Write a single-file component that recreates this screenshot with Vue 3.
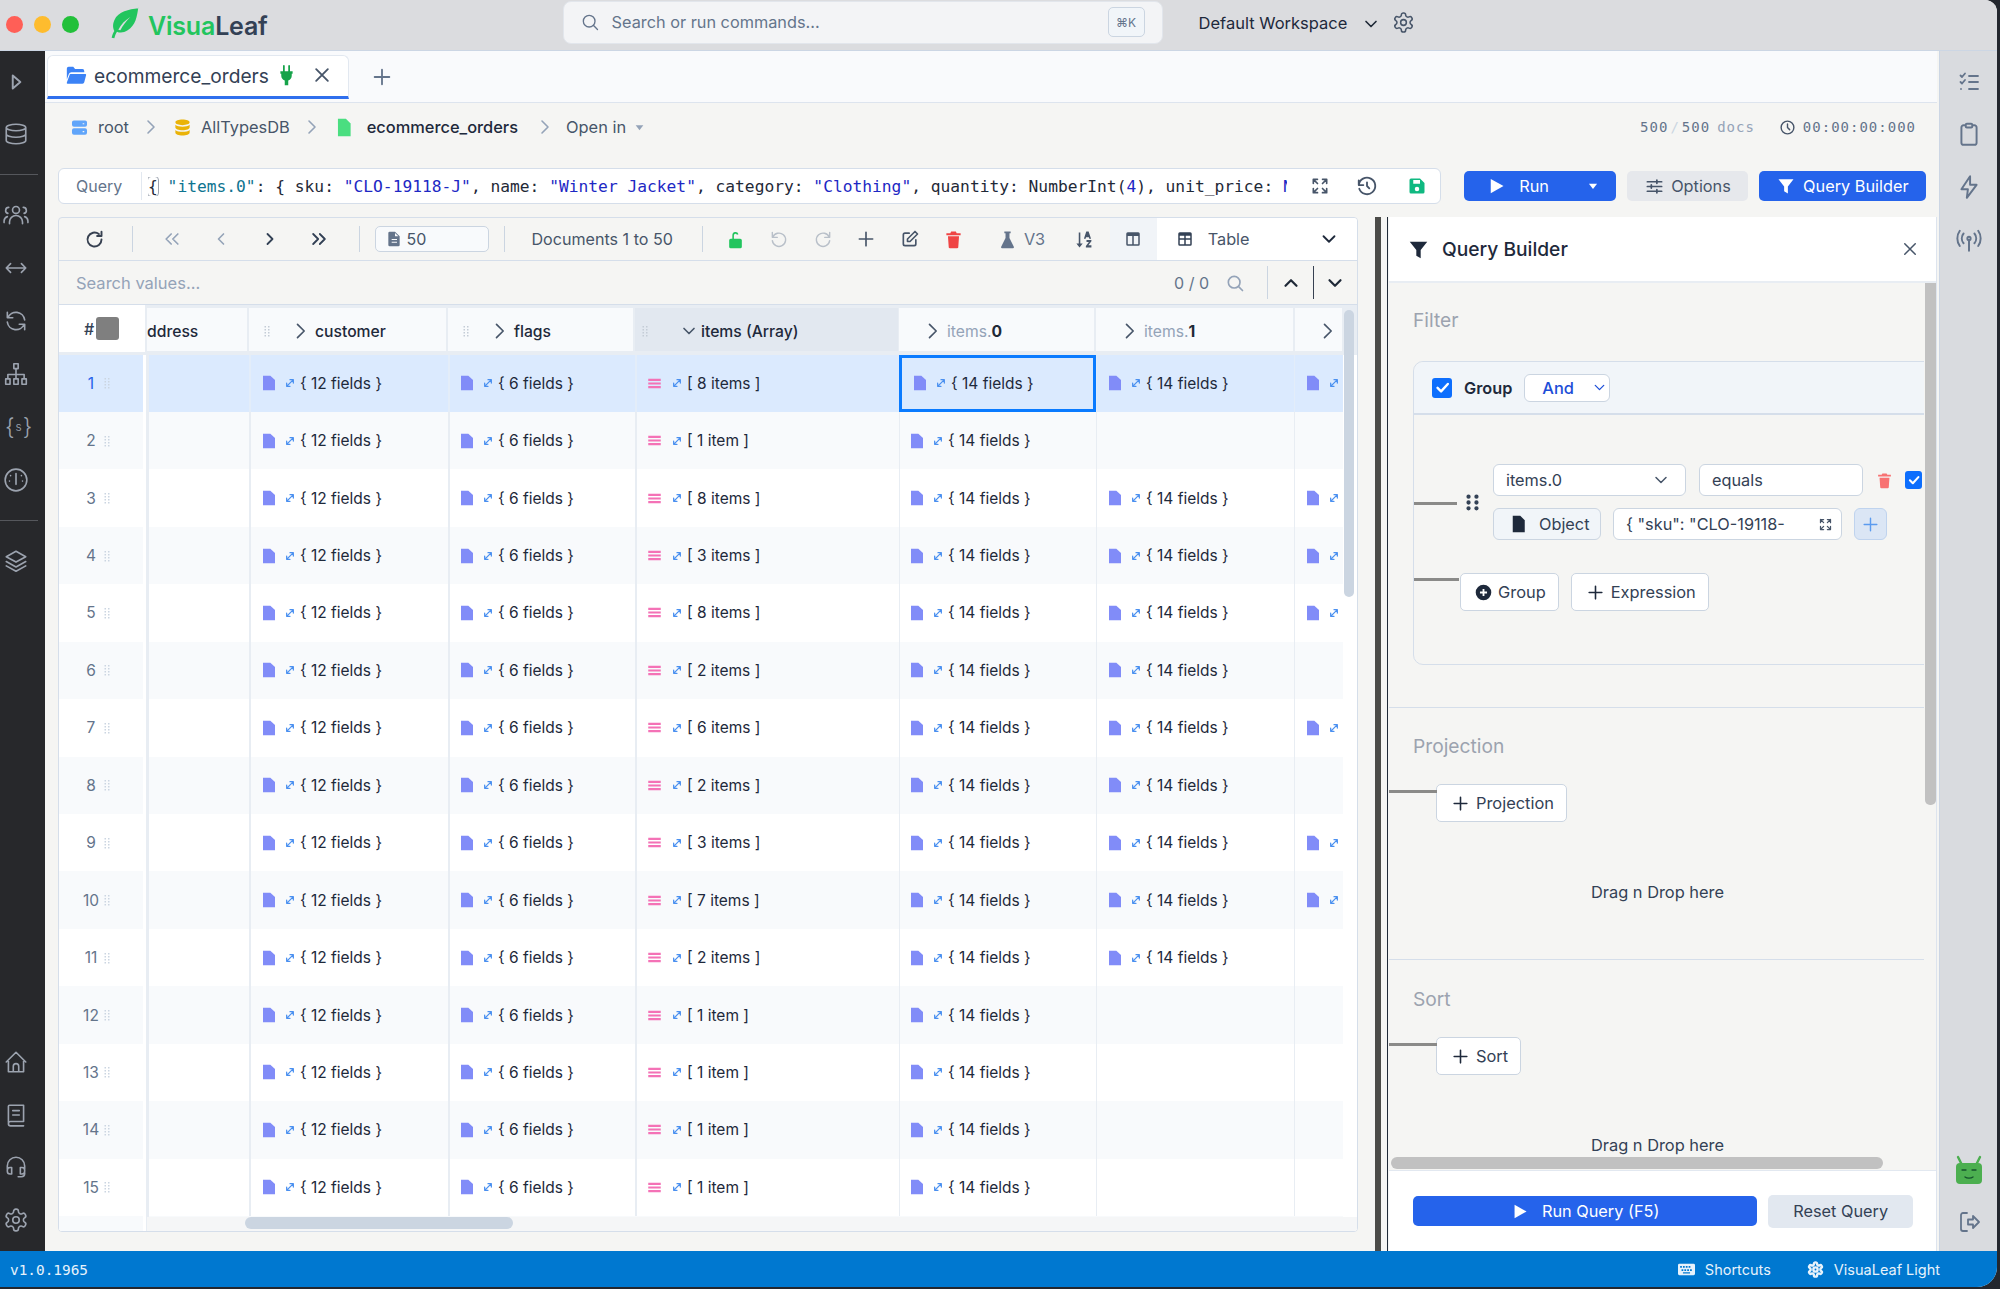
<script setup>
import { h } from 'vue'

const icons = {
  search: 'M11 4a7 7 0 1 0 0 14 7 7 0 0 0 0-14z M21 21l-5-5',
  chevDown: 'M6 9l6 6 6-6',
  chevUp: 'M6 15l6-6 6 6',
  chevRight: 'M9 4l8 8-8 8',
  chevLeft: 'M15 6l-6 6 6 6',
  chevR2: 'M9 6l6 6-6 6',
  dblLeft: 'M11 6l-6 6 6 6 M19 6l-6 6 6 6',
  dblRight: 'M5 6l6 6-6 6 M13 6l6 6-6 6',
  gear: 'M12.22 2h-.44a2 2 0 0 0-2 2v.18a2 2 0 0 1-1 1.73l-.43.25a2 2 0 0 1-2 0l-.15-.08a2 2 0 0 0-2.73.73l-.22.38a2 2 0 0 0 .73 2.73l.15.1a2 2 0 0 1 1 1.72v.51a2 2 0 0 1-1 1.74l-.15.09a2 2 0 0 0-.73 2.73l.22.38a2 2 0 0 0 2.73.73l.15-.08a2 2 0 0 1 2 0l.43.25a2 2 0 0 1 1 1.73V20a2 2 0 0 0 2 2h.44a2 2 0 0 0 2-2v-.18a2 2 0 0 1 1-1.73l.43-.25a2 2 0 0 1 2 0l.15.08a2 2 0 0 0 2.73-.73l.22-.39a2 2 0 0 0-.73-2.73l-.15-.08a2 2 0 0 1-1-1.74v-.5a2 2 0 0 1 1-1.74l.15-.09a2 2 0 0 0 .73-2.73l-.22-.38a2 2 0 0 0-2.73-.73l-.15.08a2 2 0 0 1-2 0l-.43-.25a2 2 0 0 1-1-1.73V4a2 2 0 0 0-2-2z M12 9a3 3 0 1 0 0 6 3 3 0 0 0 0-6z',
  play: 'M9 6l7 6-7 6z',
  runPlay: 'M5 2.500L22 12 5 21.500z',
  database: 'M12 3c4.97 0 9 1.34 9 3s-4.03 3-9 3-9-1.34-9-3 4.03-3 9-3z M3 6v12c0 1.66 4.03 3 9 3s9-1.34 9-3V6 M3 12c0 1.66 4.03 3 9 3s9-1.34 9-3',
  users: 'M12 10.5a3.2 3.2 0 1 0 0-6.4 3.2 3.2 0 0 0 0 6.4z M6 20v-1.5a6 6 0 0 1 12 0V20 M4.5 10.5a2.8 2.8 0 0 1 .8-5.5 M19.5 10.5a2.8 2.8 0 0 0-.8-5.5 M1 19v-1.5a4.5 4.5 0 0 1 3-4 M23 19v-1.5a4.5 4.5 0 0 0-3-4',
  arrows: 'M3 12h18 M7 8l-4 4 4 4 M17 8l4 4-4 4',
  refresh: 'M20 11A8.1 8.1 0 0 0 4.5 9M4 4v5h5 M4 13a8.1 8.1 0 0 0 15.5 2M20 20v-5h-5',
  reload: 'M20 12a8 8 0 1 1-3-6.2 M20 3v5h-5',
  sitemap: 'M10 2.5h4v4.5h-4z M2.5 16.5h4v5h-4z M10 16.5h4v5h-4z M17.5 16.5h4v5h-4z M12 7v9.5 M4.5 16.5V12.5h15v4',
  gauge: 'M12 2a10 10 0 1 0 0 20 10 10 0 0 0 0-20z M12 6v10 M7 8v.01 M17 8v.01 M6 13v.01 M18 13v.01',
  layers: 'M12 3l9 5-9 5-9-5z M3 12.5l9 5 9-5 M3 16.5l9 5 9-5',
  home: 'M3 12l9-9 9 9 M5 10v11h14V10 M9.5 21v-5a2.5 2.5 0 0 1 5 0v5',
  book: 'M5 19V4a1 1 0 0 1 1-1h13v15H7a2 2 0 0 0-2 2 2 2 0 0 0 2 2h12 M9 8h6 M9 12h6',
  headset: 'M4 14v-3a8 8 0 0 1 16 0v3 M4 15a2.5 2.5 0 0 1 2.5-2.5H8v6H6.5A2.5 2.5 0 0 1 4 16z M20 15a2.5 2.5 0 0 0-2.5-2.5H16v6h1.5A2.5 2.5 0 0 0 20 16z M20 17v1a3 3 0 0 1-3 3h-3',
  clock: 'M12 3a9 9 0 1 0 0 18 9 9 0 0 0 0-18z M12 7v5l3 3',
  expand: 'M4 9V4h5 M4 4l5 5 M20 9V4h-5 M20 4l-5 5 M4 15v5h5 M4 20l5-5 M20 15v5h-5 M20 20l-5-5',
  history: 'M12 8v4l2.5 2.5 M3.05 11a9 9 0 1 1 .5 4 M3 6v5h5',
  sliders: 'M3 6h18 M3 12h18 M3 18h18 M15 4v4 M8 10v4 M15 16v4',
  close: 'M5 5l14 14 M19 5L5 19',
  plus: 'M12 4v16 M4 12h16',
  undo: 'M4 4v6h6 M4.5 10a8 8 0 1 1-.5 4',
  redo: 'M20 4v6h-6 M19.5 10a8 8 0 1 0 .5 4',
  edit: 'M11 5H6a2 2 0 0 0-2 2v11a2 2 0 0 0 2 2h11a2 2 0 0 0 2-2v-5 M9 15v-3l9-9 3 3-9 9z',
  check: 'M5 12.5l5 5L19.5 7',
  checklist: 'M3.5 5.5l1.5 1.5 3-3.5 M3.5 12l1.5 1.5 3-3.5 M4 19h.01 M12 6h9 M12 12h9 M12 19h9',
  clipboard: 'M9 4H7a2 2 0 0 0-2 2v14a2 2 0 0 0 2 2h10a2 2 0 0 0 2-2V6a2 2 0 0 0-2-2h-2 M10 2.5h4a1 1 0 0 1 1 1V5a1 1 0 0 1-1 1h-4a1 1 0 0 1-1-1V3.500a1 1 0 0 1 1-1z',
  bolt: 'M13 2L5 14h6l-1 8 9-12h-6z',
  antenna: 'M12 9a1.5 1.5 0 1 0 0 3 1.5 1.5 0 0 0 0-3z M12 12v10 M7 6a7 7 0 0 0 0 9 M17 6a7 7 0 0 1 0 9 M3.500 3.500a12 12 0 0 0 0 14 M20.500 3.500a12 12 0 0 1 0 14',
  logout: 'M10 3H6a2 2 0 0 0-2 2v14a2 2 0 0 0 2 2h4 M11 9.500h5V6l6 6-6 6v-3.500h-5z',
  cellArrow: 'M20 4L4 20 M20 4h-8 M20 4v8 M4 20h8 M4 20v-8',
  // filled
  leaf: 'M22 1C15 2 7 3 4 10c-1.500 3.500-1 6 0 8-1 1.500-1.500 3-2 5l2 .5c.5-2 1-3.500 2-5 2 1 5 1 8-1 6-4 7-10 8-17.500zM7 17c2-4 5-7 9-9.500-3 3-5.500 6-7.500 10z',
  folder: 'M2 5a2 2 0 0 1 2-2h5l2 2.500h8a2 2 0 0 1 2 2V9H7a3 3 0 0 0-2.800 2L2 17z M6 11h16a1 1 0 0 1 1 1.300L21 20a2 2 0 0 1-2 1.500H3a1 1 0 0 1-1-1.300L5 12a1.200 1.200 0 0 1 1-1z',
  plug: 'M8 1a1 1 0 0 1 2 0v6h4V1a1 1 0 0 1 2 0v6h3v3h-1v2a6 6 0 0 1-4 5.700V23h-4v-5.300A6 6 0 0 1 6 12v-2H5V7h3z',
  server: 'M5 3h14a2.500 2.500 0 0 1 2.500 2.500v3A2.500 2.500 0 0 1 19 11H5a2.500 2.500 0 0 1-2.500-2.500v-3A2.500 2.500 0 0 1 5 3zm11 3.500v1.500h2V6.500z M5 13h14a2.500 2.500 0 0 1 2.500 2.500v3A2.500 2.500 0 0 1 19 21H5a2.500 2.500 0 0 1-2.500-2.500v-3A2.500 2.500 0 0 1 5 13zm11 3.500V18h2v-1.500z',
  dbFill: 'M12 2c5 0 9 1.300 9 3.500S17 9 12 9 3 7.700 3 5.500 7 2 12 2z M3 8.500c1.800 1.700 5.500 2.500 9 2.500s7.200-.8 9-2.500V12c0 2-4 3.500-9 3.500S3 14 3 12z M3 15c1.800 1.700 5.500 2.500 9 2.500s7.200-.8 9-2.500v3.500c0 2-4 3.500-9 3.500s-9-1.500-9-3.500z',
  file: 'M5 1h10l6 6v16H5z',
  docSmall: 'M4 1a2 2 0 0 0-2 2v18a2 2 0 0 0 2 2h13a2 2 0 0 0 2-2V8l-7-7zm3 11h8v1.500H7zm0 4h8v1.500H7z M12 3l5 5h-5z',
  caret: 'M5 8h14l-7 9z',
  filter: 'M2 3h20l-7.500 9.500V22l-5-3v-6.500z',
  lock: 'M8 11V6.500a4 4 0 0 1 7.800-1.200l-2 .7A2 2 0 0 0 10 6.500V11h8a2 2 0 0 1 2 2v8a2 2 0 0 1-2 2H6a2 2 0 0 1-2-2v-8a2 2 0 0 1 2-2z',
  trash: 'M9 2h6l1 2h5v2.500H3V4h5z M5 8h14l-1 14a1.500 1.500 0 0 1-1.500 1h-9A1.500 1.500 0 0 1 6 22z',
  flask: 'M8 2h8v2h-1.500v6L20 21a1.500 1.500 0 0 1-1.300 2H5.300A1.500 1.500 0 0 1 4 21l5.500-11V4H8z',
  sortAz: 'M6 3h2v14h3l-4 5-4-5h3z M15.500 2h3l3 9h-2.200l-.5-1.700h-3.600L14.700 11h-2.200z M15.800 12.500H22v1.800l-3.800 5H22V22h-7v-1.800l3.800-5h-3z',
  columns: 'M5 3h14a2 2 0 0 1 2 2v14a2 2 0 0 1-2 2H5a2 2 0 0 1-2-2V5a2 2 0 0 1 2-2zm0 5v11h6V8zm8 0v11h6V8z',
  table: 'M5 3h14a2 2 0 0 1 2 2v14a2 2 0 0 1-2 2H5a2 2 0 0 1-2-2V5a2 2 0 0 1 2-2zm0 4.500V11h6V7.500zm8 0V11h6V7.500zM5 13v6h6v-6zm8 0v6h6v-6z',
  save: 'M5 2h11l6 6v12a2 2 0 0 1-2 2H4a2 2 0 0 1-2-2V4a2 2 0 0 1 2-2zm2 2v5h9V4zm5 9a3 3 0 1 0 0 6 3 3 0 0 0 0-6z',
  keyboard: 'M2 4h20a2 2 0 0 1 2 2v12a2 2 0 0 1-2 2H2a2 2 0 0 1-2-2V6a2 2 0 0 1 2-2zm1 3v2.500h2.500V7zm4 0v2.500h2.500V7zm4 0v2.500h2.500V7zm4 0v2.500h2.500V7zM5 11.500V14h2.500v-2.500zm4 0V14h2.500v-2.500zm4 0V14h2.500v-2.500zm4 0V14h2.500v-2.500zM7 16v1.500h10V16z',
  circlePlus: 'M12 1a11 11 0 1 0 0 22 11 11 0 0 0 0-22zm-1.300 6h2.600v3.700H17v2.600h-3.700V17h-2.600v-3.700H7v-2.600h3.700z',
  grip: 'M7 2a2.700 2.700 0 1 0 0 5.400 2.700 2.700 0 0 0 0-5.400z M17 2a2.700 2.700 0 1 0 0 5.400 2.700 2.700 0 0 0 0-5.400z M7 9.300a2.700 2.700 0 1 0 0 5.400 2.700 2.700 0 0 0 0-5.400z M17 9.300a2.700 2.700 0 1 0 0 5.400 2.700 2.700 0 0 0 0-5.400z M7 16.600a2.700 2.700 0 1 0 0 5.400 2.700 2.700 0 0 0 0-5.400z M17 16.600a2.700 2.700 0 1 0 0 5.400 2.700 2.700 0 0 0 0-5.400z',
  dots: 'M7 2h3v3H7z M14 2h3v3h-3z M7 8h3v3H7z M14 8h3v3h-3z M7 14h3v3H7z M14 14h3v3h-3z M7 20h3v3H7z M14 20h3v3h-3z',
  docCell: 'M3 1h11l7 6.500V23H3z',
  bars: 'M2 4.500h20v3.300H2z M2 10.300h20v3.300H2z M2 16.100h20v3.300H2z'
}

const Icon = (p) =>
  h('svg', {
    viewBox: '0 0 24 24',
    width: p.size || 20,
    height: p.size || 20,
    fill: p.fill ? 'currentColor' : 'none',
    'fill-rule': 'evenodd',
    stroke: p.fill ? 'none' : 'currentColor',
    'stroke-width': p.sw || 2,
    'stroke-linecap': 'round',
    'stroke-linejoin': 'round'
  }, [h('path', { d: icons[p.name] })])
Icon.props = { name: String, size: Number, sw: Number, fill: Boolean }

const topSide = [
  { name: 'database' },
  { sep: true },
  { name: 'users' },
  { name: 'arrows' },
  { name: 'refresh' },
  { name: 'sitemap' },
  { text: true },
  { name: 'gauge' },
  { sep: true },
  { name: 'layers' }
]

const itemCounts = [8, 1, 8, 3, 8, 2, 6, 2, 3, 7, 2, 1, 1, 1, 1]
const rows = itemCounts.map((n, i) => ({ no: i + 1, n, label: n === 1 ? '[ 1 item ]' : `[ ${n} items ]` }))
</script>

<template>
  <div class="app">
    <header class="titlebar">
      <div class="lights"><i class="red"></i><i class="amber"></i><i class="green"></i></div>
      <Icon name="leaf" :size="32" fill class="logo-leaf" />
      <div class="logo"><span class="logo-a">Visua</span><span class="logo-b">Leaf</span></div>
      <div class="cmd">
        <Icon name="search" :size="20" :sw="1.6" class="cmd-icon" />
        <span>Search or run commands...</span>
        <kbd>⌘K</kbd>
      </div>
      <div class="workspace">Default Workspace</div>
      <Icon name="chevDown" :size="20" :sw="2" class="ws-chev" />
      <Icon name="gear" :size="23" :sw="1.6" class="ws-gear" />
    </header>

    <div class="middle">
      <aside class="side">
        <div class="side-group">
          <Icon name="play" :size="26" :sw="1.8" class="side-play" />
          <template v-for="(it, i) in topSide" :key="i">
            <div v-if="it.sep" class="side-sep"></div>
            <div v-else-if="it.text" class="side-item side-s"><span>{</span><small>s</small><span>}</span></div>
            <div v-else class="side-item"><Icon :name="it.name" :size="26" :sw="1.5" /></div>
          </template>
        </div>
        <div class="side-group side-bottom">
          <div class="side-item"><Icon name="home" :size="26" :sw="1.5" /></div>
          <div class="side-item"><Icon name="book" :size="26" :sw="1.5" /></div>
          <div class="side-item"><Icon name="headset" :size="26" :sw="1.5" /></div>
          <div class="side-item"><Icon name="gear" :size="26" :sw="1.5" /></div>
        </div>
      </aside>

      <main class="main">
        <div class="tabs">
          <div class="tab">
            <Icon name="folder" :size="22" fill class="c-blue" />
            <span class="tab-name">ecommerce_orders</span>
            <Icon name="plug" :size="21" fill class="c-plug" />
            <Icon name="close" :size="20" :sw="2.2" class="tab-x" />
          </div>
          <Icon name="plus" :size="22" :sw="2" class="tab-add" />
        </div>

        <div class="crumbs">
          <Icon name="server" :size="19" fill class="c-blue2" />
          <span class="cr root">root</span>
          <Icon name="chevR2" :size="24" :sw="1.6" class="cr-chev" />
          <Icon name="dbFill" :size="19" fill class="c-amber" />
          <span class="cr">AllTypesDB</span>
          <Icon name="chevR2" :size="24" :sw="1.6" class="cr-chev" />
          <Icon name="file" :size="19" fill class="c-mint" />
          <span class="cr cr-strong">ecommerce_orders</span>
          <Icon name="chevR2" :size="24" :sw="1.6" class="cr-chev cr-chev3" />
          <span class="cr cr-open">Open in</span>
          <Icon name="caret" :size="13" fill class="cr-caret" />
          <div class="stats">
            <span class="st-num">500</span><span class="st-slash">/</span><span class="st-num">500</span>
            <span class="st-docs">docs</span>
            <Icon name="clock" :size="17" :sw="2" class="st-clock" />
            <span class="st-num">00:00:00:000</span>
          </div>
        </div>

        <div class="query-row">
          <div class="query">
            <span class="q-label">Query</span>
            <span class="q-sep"></span>
            <div class="q-code"><span class="q-cursor">{</span> <span class="q-key">"items.0"</span>: { sku: <span class="q-str">"CLO-19118-J"</span>, name: <span class="q-str">"Winter Jacket"</span>, category: <span class="q-str">"Clothing"</span>, quantity: NumberInt(<span class="q-str">4</span>), unit_price: <span class="q-str">NumberDecimal</span></div>
            <Icon name="expand" :size="20" :sw="2" class="q-ic q-expand" />
            <Icon name="history" :size="22" :sw="2" class="q-ic q-hist" />
            <Icon name="save" :size="18" fill class="q-save" />
          </div>
          <button class="btn btn-run">
            <Icon name="runPlay" :size="18" fill class="run-play" />
            <span>Run</span>
            <Icon name="caret" :size="14" fill class="run-caret" />
          </button>
          <button class="btn btn-options">
            <Icon name="sliders" :size="19" :sw="2.2" />
            <span>Options</span>
          </button>
          <button class="btn btn-qb">
            <Icon name="filter" :size="18" fill />
            <span>Query Builder</span>
          </button>
        </div>

        <div class="work">
          <section class="grid-card">
            <div class="toolbar">
              <div class="tb tb-reload"><Icon name="reload" :size="21" :sw="2.2" /></div>
              <i class="tb-sep"></i>
              <div class="tb-nav c-faint"><Icon name="dblLeft" :size="20" :sw="2" /></div>
              <div class="tb-nav c-faint"><Icon name="chevLeft" :size="20" :sw="2" /></div>
              <div class="tb-nav"><Icon name="chevR2" :size="20" :sw="2.2" /></div>
              <div class="tb-nav"><Icon name="dblRight" :size="20" :sw="2.2" /></div>
              <i class="tb-sep"></i>
              <div class="page-size"><Icon name="docSmall" :size="16" fill /><span>50</span></div>
              <i class="tb-sep tb-sep3"></i>
              <span class="docs-range">Documents 1 to 50</span>
              <i class="tb-sep tb-sep4"></i>
              <div class="tb c-lock"><Icon name="lock" :size="19" fill /></div>
              <div class="tb c-mute"><Icon name="undo" :size="20" :sw="1.7" /></div>
              <div class="tb c-mute"><Icon name="redo" :size="20" :sw="1.7" /></div>
              <div class="tb c-slate"><Icon name="plus" :size="20" :sw="2" /></div>
              <div class="tb c-slate"><Icon name="edit" :size="20" :sw="2" /></div>
              <div class="tb c-red"><Icon name="trash" :size="19" fill /></div>
              <div class="tb-v3"><Icon name="flask" :size="19" fill /><span>V3</span></div>
              <div class="tb tb-sort"><Icon name="sortAz" :size="19" fill /></div>
              <div class="tb-cols"><Icon name="columns" :size="18" fill /></div>
              <div class="view-select">
                <Icon name="table" :size="18" fill />
                <span>Table</span>
                <Icon name="chevDown" :size="22" :sw="2" class="view-chev" />
              </div>
            </div>
            <div class="searchbar">
              <span class="sv-text">Search values...</span>
              <span class="sv-count">0 / 0</span>
              <Icon name="search" :size="20" :sw="2" class="sv-icon" />
              <i class="sv-sep"></i>
              <Icon name="chevUp" :size="22" :sw="2.4" class="sv-up" />
              <i class="sv-sep dark"></i>
              <Icon name="chevDown" :size="22" :sw="2.4" class="sv-down" />
            </div>

            <div class="grid">
              <div class="grid-head">
                <div class="hd-idx"><span>#</span><i class="hd-box"></i></div>
                <div class="hd addr"><span class="hd-clip">ddress</span></div>
                <div class="hd cust">
                  <Icon name="dots" :size="12" fill class="grip" />
                  <Icon name="chevRight" :size="20" :sw="2" class="hd-chev" />
                  <span>customer</span>
                </div>
                <div class="hd flags">
                  <Icon name="dots" :size="12" fill class="grip" />
                  <Icon name="chevRight" :size="20" :sw="2" class="hd-chev" />
                  <span>flags</span>
                </div>
                <div class="hd items active">
                  <Icon name="dots" :size="12" fill class="grip" />
                  <Icon name="chevDown" :size="20" :sw="2" class="hd-chev2" />
                  <span>items (Array)</span>
                </div>
                <div class="hd item0 sub">
                  <Icon name="chevRight" :size="20" :sw="2" class="hd-chev" />
                  <span class="faint">items.</span><b>0</b>
                </div>
                <div class="hd item1 sub">
                  <Icon name="chevRight" :size="20" :sw="2" class="hd-chev" />
                  <span class="faint">items.</span><b>1</b>
                </div>
                <div class="hd item2 sub"><Icon name="chevRight" :size="20" :sw="2" class="hd-chev" /></div>
              </div>

              <div v-for="r in rows" :key="r.no" class="row" :class="{ selected: r.no === 1, alt: r.no % 2 === 0 }">
                <div class="idx"><span class="idx-no">{{ r.no }}</span><Icon name="dots" :size="12" fill class="idx-dots" /></div>
                <div class="cell addr"></div>
                <div class="cell cust">
                  <Icon name="docCell" :size="16" fill class="ic-doc" />
                  <Icon name="cellArrow" :size="10" :sw="3" class="ic-arrow" />
                  <span>{ 12 fields }</span>
                </div>
                <div class="cell flags">
                  <Icon name="docCell" :size="16" fill class="ic-doc" />
                  <Icon name="cellArrow" :size="10" :sw="3" class="ic-arrow" />
                  <span>{ 6 fields }</span>
                </div>
                <div class="cell items">
                  <Icon name="bars" :size="15" fill class="ic-bars" />
                  <Icon name="cellArrow" :size="10" :sw="3" class="ic-arrow" />
                  <span>{{ r.label }}</span>
                </div>
                <div class="cell item0" :class="{ focus: r.no === 1 }">
                  <Icon name="docCell" :size="16" fill class="ic-doc" />
                  <Icon name="cellArrow" :size="10" :sw="3" class="ic-arrow" />
                  <span>{ 14 fields }</span>
                </div>
                <div class="cell item1">
                  <template v-if="r.n > 1">
                    <Icon name="docCell" :size="16" fill class="ic-doc" />
                    <Icon name="cellArrow" :size="10" :sw="3" class="ic-arrow" />
                    <span>{ 14 fields }</span>
                  </template>
                </div>
                <div class="cell item2">
                  <template v-if="r.n > 2">
                    <Icon name="docCell" :size="16" fill class="ic-doc" />
                    <Icon name="cellArrow" :size="10" :sw="3" class="ic-arrow" />
                  </template>
                </div>
              </div>
              <div class="row alt"><div class="idx"></div></div>

              <i class="vbar"></i>
              <div class="htrack"><i class="hbar"></i></div>
            </div>
          </section>

          <div class="splitter"><i></i></div>

          <section class="panel">
            <div class="panel-head">
              <Icon name="filter" :size="21" fill />
              <span>Query Builder</span>
              <Icon name="close" :size="18" :sw="2" class="panel-x" />
            </div>
            <div class="panel-body">
              <div class="panel-scroll">
                <div class="sec sec-filter">
                  <h3>Filter</h3>
                  <div class="group-card">
                    <div class="group-head">
                      <span class="cb"><Icon name="check" :size="17" :sw="3.4" /></span>
                      <b>Group</b>
                      <div class="and">And <Icon name="chevDown" :size="17" :sw="1.8" /></div>
                    </div>
                    <div class="expr">
                      <i class="link"></i>
                      <Icon name="grip" :size="19" fill class="expr-grip" />
                      <div class="expr-rows">
                        <div class="expr-line">
                          <div class="fld fld-sel">items.0 <Icon name="chevDown" :size="20" :sw="1.8" class="fld-chev" /></div>
                          <div class="fld fld-op">equals</div>
                          <Icon name="trash" :size="17" fill class="expr-trash" />
                          <span class="cb cb-small"><Icon name="check" :size="14" :sw="3.6" /></span>
                        </div>
                        <div class="expr-line">
                          <div class="fld fld-type"><Icon name="file" :size="18" fill /> Object</div>
                          <div class="fld fld-val">{ "sku": "CLO-19118-<Icon name="expand" :size="15" :sw="2" class="fld-exp" /></div>
                          <div class="fld fld-add"><Icon name="plus" :size="19" :sw="1.8" /></div>
                        </div>
                      </div>
                    </div>
                    <div class="group-actions">
                      <i class="link link2"></i>
                      <button class="ghost"><Icon name="circlePlus" :size="17" fill /> Group</button>
                      <button class="ghost"><Icon name="plus" :size="19" :sw="2" /> Expression</button>
                    </div>
                  </div>
                </div>
                <div class="sec sec-proj">
                  <h3>Projection</h3>
                  <div class="tree-btn"><i class="link link3"></i><button class="ghost"><Icon name="plus" :size="19" :sw="2" /> Projection</button></div>
                  <p class="drop">Drag n Drop here</p>
                </div>
                <div class="sec sec-sort">
                  <h3>Sort</h3>
                  <div class="tree-btn"><i class="link link3"></i><button class="ghost"><Icon name="plus" :size="19" :sw="2" /> Sort</button></div>
                  <p class="drop drop2">Drag n Drop here</p>
                </div>
              </div>
              <i class="panel-v"></i>
              <i class="panel-h"></i>
            </div>
            <div class="panel-foot">
              <button class="btn foot-run"><Icon name="runPlay" :size="17" fill /> <span>Run Query (F5)</span></button>
              <button class="btn foot-reset">Reset Query</button>
            </div>
          </section>
        </div>
      </main>

      <aside class="rail">
        <div class="rail-top">
          <Icon name="checklist" :size="24" :sw="1.8" />
          <Icon name="clipboard" :size="26" :sw="1.8" />
          <Icon name="bolt" :size="26" :sw="1.8" />
          <Icon name="antenna" :size="26" :sw="1.8" />
        </div>
        <div class="rail-bottom">
          <svg class="robot" viewBox="0 0 28 30" width="28" height="30">
            <path d="M7 10L3 2M21 10l4-8" stroke="#4caf50" stroke-width="2.4" stroke-linecap="round" fill="none" />
            <rect x="1" y="8" width="26" height="21" rx="4" fill="#4caf50" />
            <path d="M7 15h4M17 15h4M10 22c2 1.500 6 1.500 8 0" stroke="#14532d" stroke-width="1.300" stroke-linecap="round" fill="none" />
          </svg>
          <Icon name="logout" :size="24" :sw="1.8" />
        </div>
      </aside>
    </div>

    <footer class="status">
      <span class="version">v1.0.1965</span>
      <div class="st-item st-short"><Icon name="keyboard" :size="17" fill /><span>Shortcuts</span></div>
      <div class="st-item"><Icon name="gear" :size="17" :sw="3.4" /><span>VisuaLeaf Light</span></div>
    </footer>
  </div>
</template>

<style>
html, body { margin: 0; background: #23272e; }
</style>

<style scoped>
* { box-sizing: border-box; }
svg { flex: none; display: block; }
i { display: block; font-style: normal; }
button { font: inherit; cursor: pointer; }

.app {
  width: 1997px;
  height: 1287px;
  display: flex;
  flex-direction: column;
  overflow: hidden;
  border-radius: 0 12px 20px 0;
  font-family: Inter, "Liberation Sans", sans-serif;
  font-size: 15.500px;
  color: #1e293b;
  background: #f5f5f3;
}

/* title bar */
.titlebar {
  height: 51px;
  flex: none;
  display: flex;
  align-items: center;
  background: #dbdcdf;
  border-bottom: 1px solid #ccd6e4;
}
.lights { display: flex; gap: 11px; margin-left: 6px; }
.lights i { width: 17px; height: 17px; border-radius: 50%; margin-top: -1px; }
.red { background: #ff5f57; }
.amber { background: #febc2e; }
.green { background: #22c03a; }
.logo-leaf { color: #22c55e; margin-left: 30px; margin-top: -4px; }
.logo { margin-left: 7px; font-size: 25px; font-weight: 600; letter-spacing: -0.2px; margin-top: 2px; }
.logo-a { color: #22c55e; }
.logo-b { color: #334155; }
.cmd {
  width: 600px;
  height: 43px;
  margin-left: 295px;
  margin-top: -6px;
  padding: 0 17px 0 16px;
  display: flex;
  align-items: center;
  background: #f3f4f6;
  border: 1px solid #e2e6ec;
  border-radius: 8px;
  color: #64748b;
  font-size: 16.300px;
}
.cmd-icon { margin-right: 12px; }
.cmd kbd {
  margin-left: auto;
  width: 37px;
  height: 30px;
  display: flex;
  align-items: center;
  justify-content: center;
  background: #f1f5f9;
  border: 1px solid #cbd5e1;
  border-radius: 5px;
  font-family: Inter, sans-serif;
  font-size: 12px;
  color: #64748b;
}
.workspace { margin-left: 36px; font-size: 16.500px; color: #1e293b; margin-top: -4px; }
.ws-chev { margin-left: 14px; color: #1f2937; margin-top: -3px; }
.ws-gear { margin-left: 11px; margin-top: -6px; color: #475569; }

.middle { flex: 1; min-height: 0; display: flex; }

/* left rail */
.side {
  width: 45px;
  flex: none;
  background: #27282b;
  color: #9ca3af;
  display: flex;
  flex-direction: column;
  justify-content: space-between;
  padding-top: 18px;
  padding-bottom: 5px;
}
.side-group { display: flex; flex-direction: column; width: 100%; }
.side-play { margin-left: 3px; margin-bottom: 12px; color: #9ca3af; }
.side-item { height: 53px; padding-left: 3px; display: flex; align-items: center; }
.side-sep { width: 38px; height: 1px; flex: none; background: #55575c; margin: 14px 0 13px; }
.side-s { font-size: 23px; font-weight: 300; padding-left: 5px; }
.side-s small { font-size: 12px; margin: 0 1px; }
.side-bottom .side-item { height: 52.500px; }

/* tabs */
.main { flex: 1; min-width: 0; display: flex; flex-direction: column; }
.tabs {
  height: 52px;
  flex: none;
  display: flex;
  align-items: center;
  background: #f9fafc;
  border-bottom: 1px solid #dde4ee;
}
.tab {
  width: 302px;
  height: 44px;
  margin-left: 2px;
  margin-top: 1px;
  padding: 0 0 2px 17px;
  display: flex;
  align-items: center;
  background: #fff;
  border: 1px solid #e2e8f0;
  border-bottom: 3px solid #2f6fed;
  border-radius: 6px 6px 0 0;
}
.tab-name { margin-left: 7px; margin-top: 2px; font-size: 19.200px; color: #334155; }
.c-blue { color: #3b82f6; }
.c-plug { color: #16a34a; margin-left: 7px; }
.tab-x { margin-left: 15px; color: #475569; }
.tab-add { margin-left: 22px; color: #64748b; }

/* breadcrumb */
.crumbs {
  height: 65px;
  flex: none;
  padding: 0 21px 17px 25px;
  display: flex;
  align-items: center;
  color: #475569;
}
.cr { font-size: 16.400px; margin-left: 9px; }
.cr-chev { color: #94a3b8; margin: 0 10px; }
.cr-strong { color: #1e293b; margin-left: 14px; font-weight: 500; }
.cr-chev3 { margin-left: 15px; margin-right: 0; }
.c-blue2 { color: #60a5fa; }
.c-amber { color: #eab308; }
.c-mint { color: #4ade80; }
.cr-caret { color: #94a3b8; margin-left: 7px; }
.stats {
  margin-left: auto;
  display: flex;
  align-items: center;
  font-family: "DejaVu Sans Mono", monospace;
  font-size: 14px;
  letter-spacing: 1px;
}
.st-num { color: #64748b; }
.st-slash { color: #cbd5e1; margin: 0 2px; }
.st-docs { color: #94a3b8; margin-left: 7px; }
.st-clock { margin: 0 7px 0 24px; color: #475569; }

/* query row */
.query-row { height: 36px; flex: none; margin: 0 11px 0 13px; display: flex; align-items: center; }
.query {
  width: 1384px;
  height: 36px;
  display: flex;
  align-items: center;
  background: #fff;
  border: 1px solid #d5deea;
  border-radius: 6px;
}
.q-label { padding-left: 17px; width: 82px; font-size: 16px; color: #64748b; }
.q-sep { width: 1px; height: 28px; background: #e2e8f0; }
.q-code {
  width: 1139px;
  margin-left: 6px;
  font-family: "DejaVu Sans Mono", monospace;
  font-size: 16.250px;
  color: #1f2937;
  white-space: pre;
  overflow: hidden;
}
.q-cursor { outline: 1px solid #9ca3af; border-radius: 3px; }
.q-key { color: #0e7490; }
.q-str { color: #1d28c4; }
.q-ic { color: #475569; }
.q-expand { margin-left: 23px; color: #475569; }
.q-hist { margin-left: 26px; }
.q-save { margin-left: 30px; color: #10b981; }

.btn {
  height: 30px;
  display: flex;
  align-items: center;
  border: none;
  border-radius: 5px;
  font-size: 16.300px;
  font-family: inherit;
}
.btn-run {
  width: 152px;
  margin-left: 23px;
  padding: 0 0 0 23px;
  background: #2563eb;
  color: #fff;
}
.run-play { margin-right: 14px; }
.run-caret { margin-left: auto; margin-right: 16px; }
.btn-options {
  width: 121px;
  margin-left: 11px;
  padding: 0 0 0 18px;
  gap: 7px;
  background: #e6e8ec;
  color: #475569;
}
.btn-qb {
  width: 167px;
  margin-left: 11px;
  padding: 0 0 0 18px;
  gap: 8px;
  background: #2563eb;
  color: #fff;
}

/* work area */
.work { flex: 1; min-height: 0; margin-top: 13px; padding-left: 13px; display: flex; }
.grid-card {
  width: 1300px;
  height: 1015px;
  display: flex;
  flex-direction: column;
  border: 1px solid #d5deea;
  border-radius: 4px;
  overflow: hidden;
}
.toolbar {
  height: 43px;
  flex: none;
  display: flex;
  align-items: center;
  padding-left: 14px;
  color: #334155;
  border-bottom: 1px solid #d5deea;
}
.tb { width: 43.500px; display: flex; justify-content: center; }
.tb-reload { color: #374151; }
.tb-nav { width: 49px; display: flex; justify-content: center; }
.tb-sep { width: 1px; height: 26px; background: #cbd5e1; margin: 0 15px; }
.tb-sep3 { margin-left: 15px; margin-right: 0; }
.tb-sep4 { margin-left: 29px; margin-right: 11px; }
.c-faint { color: #94a3b8; }
.page-size {
  width: 114px;
  height: 26px;
  padding-left: 11px;
  display: flex;
  align-items: center;
  gap: 4px;
  background: #f8fafc;
  border: 1px solid #cbd5e1;
  border-radius: 5px;
  font-size: 16px;
  color: #475569;
}
.page-size svg { color: #64748b; }
.docs-range { margin-left: 27px; font-size: 16.100px; color: #475569; }
.c-lock { color: #22c55e; }
.c-mute { color: #b9c0c9; }
.c-slate { color: #475569; }
.c-red { color: #ef4444; }
.tb-v3 { margin-left: 23px; display: flex; align-items: center; gap: 7px; color: #64748b; font-size: 16.300px; }
.tb-sort { margin-left: 17px; color: #475569; }
.tb-cols {
  width: 47px;
  height: 42px;
  margin-left: 4px;
  display: flex;
  align-items: center;
  justify-content: center;
  background: #f1f4f8;
  color: #475569;
}
.view-select {
  flex: 1;
  height: 42px;
  padding-left: 19px;
  display: flex;
  align-items: center;
  gap: 14px;
  background: #fff;
  color: #475569;
  font-size: 16.300px;
}
.view-select svg { color: #334155; }
.view-chev { margin-left: auto; margin-right: 17px; color: #1e293b !important; }

.searchbar {
  height: 44px;
  flex: none;
  display: flex;
  align-items: center;
  padding-left: 17px;
  border-bottom: 1px solid #d5deea;
}
.sv-text { color: #94a3b8; font-size: 16.500px; }
.sv-count { margin-left: auto; color: #64748b; font-size: 16px; }
.sv-icon { color: #94a3b8; margin-left: 16px; }
.sv-sep { width: 1px; height: 33px; background: #cbd5e1; margin-left: 22px; }
.sv-sep.dark { background: #374151; margin-left: 11px; }
.sv-up { margin-left: 12px; color: #1f2937; }
.sv-down { margin-left: 10px; margin-right: 11px; color: #1f2937; }

/* grid */
.grid { position: relative; flex: 1; min-height: 0; overflow: hidden; background: #fff; }
.grid-head { height: 49.500px; display: flex; background: #e8edf3; padding-top: 3px; }
.hd-idx {
  width: 86px;
  height: 47px;
  margin-top: -3px;
  background: #fff;
  display: flex;
  align-items: center;
  padding-left: 25px;
  gap: 2px;
  font-size: 16px;
  color: #334155;
  font-weight: 500;
}
.hd-box { width: 23px; height: 23px; border-radius: 3px; background: #7f7f7f; }
.hd {
  height: 43px;
  margin-right: 2px;
  padding-top: 3px;
  display: flex;
  align-items: center;
  background: #f8fafc;
  font-weight: 500;
  font-size: 15.700px;
  color: #1e293b;
  flex: none;
}
.hd.addr { margin-left: 2px; width: 100px; overflow: hidden; }
.hd-clip { display: block; }
.hd.cust { width: 197px; padding-left: 12px; }
.hd.flags { width: 185px; padding-left: 12px; }
.hd.items { width: 263px; margin-right: 1px; padding-left: 4px; background: #e2e8f0; }
.hd.item0 { width: 195px; padding-left: 23px; }
.hd.item1 { width: 197px; padding-left: 23px; }
.hd.item2 { width: 47px; padding-left: 22px; margin-right: 0; }
.grip { color: #c4ccd6; margin-right: 17px; }
.hd-chev { color: #475569; margin-right: 5px; }
.hd-chev2 { color: #475569; margin-left: 11px; margin-right: 2px; }
.hd .faint { color: #94a3b8; font-weight: 400; }
.hd b { font-weight: 700; color: #1f2937; }

.row {
  width: 1284px;
  height: 57.450px;
  display: flex;
  background: #fff;
}
.row.alt { background: #f8fafc; }
.row.selected { background: #dbeafe; }
.idx {
  width: 82px;
  margin-left: 2px;
  flex: none;
  display: flex;
  align-items: center;
  background: inherit;
  margin-right: 5px;
  box-shadow: 3px 0 0 #fff, 6px 0 0 #e8edf3;
  color: #64748b;
}
.row.selected .idx { color: #2563eb; }
.idx-no { width: 30px; margin-left: 15px; text-align: center; font-size: 15.500px; }
.idx-dots { color: #cbd5e1; margin-left: -5px; }
.cell {
  height: 100%;
  flex: none;
  display: flex;
  align-items: center;
  overflow: hidden;
  padding-left: 10px;
  border-left: 2px solid #e8edf3;
  font-size: 15.500px;
  color: #1e293b;
  white-space: nowrap;
}
.row.selected .cell { border-left-color: #e3edf9; }
.cell.addr { width: 101px; border-left: none; }
.cell.cust { width: 199px; padding-left: 12px; }
.cell.flags { width: 187px; padding-left: 11px; }
.cell.items { width: 264px; }
.cell.item0 { width: 197px; border-left-width: 1px; padding-left: 11px; }
.cell.item1 { width: 198px; border-left-width: 1px; padding-left: 12px; }
.cell.item2 { width: 48px; border-left-width: 1px; padding-left: 12px; }
.cell.focus {
  outline: 3px solid #0a7bff;
  outline-offset: -3px;
  padding-left: 14px;
}
.ic-doc { color: #818cf8; margin-left: -2px; }
.ic-bars { color: #f472b6; }
.ic-arrow { color: #4a90f0; margin-left: 8px; margin-right: 5px; }
.ic-bars + .ic-arrow { margin-left: 10px; }

.vbar {
  position: absolute;
  left: 1285px;
  top: 5px;
  width: 10px;
  height: 287px;
  border-radius: 5px;
  background: #cbd5e1;
}
.htrack {
  position: absolute;
  left: 88px;
  right: 0;
  top: 912px;
  height: 14px;
  background: #f5f6f7;
}
.hbar {
  position: absolute;
  left: 98px;
  top: 0;
  width: 268px;
  height: 12px;
  border-radius: 6px;
  background: #cbd5e1;
}

/* splitter */
.splitter { width: 31px; flex: none; display: flex; position: relative; }
.splitter i { width: 6px; margin-left: 17px; background: #4b4b48; }
.splitter::after { content: ""; position: absolute; left: 29px; top: 0; bottom: 0; width: 1px; background: #1f2937; }

/* query builder */
.panel {
  width: 548px;
  display: flex;
  flex-direction: column;
  background: #fff;
  border-right: 1px solid #dde4ee;
}
.panel-head {
  height: 66px;
  flex: none;
  display: flex;
  align-items: center;
  gap: 13px;
  padding-left: 19px;
  font-size: 19.200px;
  font-weight: 500;
  color: #1e293b;
  border-bottom: 2px solid #e8edf3;
}
.panel-x { margin-left: auto; margin-right: 17px; color: #475569; }
.panel-body { position: relative; flex: 1; min-height: 0; overflow: hidden; background: #f5f5f3; }
.panel-scroll { width: 535px; overflow: hidden; }
.sec { border-bottom: 1px solid #d5deea; padding-left: 24px; }
.sec h3 {
  margin: 0;
  font-size: 19.200px;
  font-weight: 400;
  color: #9ca3af;
  line-height: 24px;
}
.sec-filter { height: 425px; padding-top: 25px; }
.sec-proj { height: 252px; padding-top: 26px; }
.sec-sort { border-bottom: none; height: 300px; padding-top: 27px; }

.group-card {
  position: relative;
  width: 560px;
  height: 304px;
  margin-top: 29px;
  border: 1px solid #d5deea;
  border-radius: 10px;
}
.group-head {
  height: 53px;
  display: flex;
  align-items: center;
  padding-left: 18px;
  background: #f1f5f9;
  border-bottom: 2px solid #d5deea;
  border-radius: 10px 10px 0 0;
}
.group-head b { margin-left: 12px; font-weight: 600; font-size: 16.300px; }
.cb {
  width: 20px;
  height: 20px;
  display: flex;
  align-items: center;
  justify-content: center;
  flex: none;
  background: #0d6efd;
  border-radius: 3px;
  color: #fff;
}
.cb-small { width: 17px; height: 18px; margin-left: 12px; }
.and {
  width: 86px;
  height: 28px;
  margin-left: 12px;
  padding-left: 17px;
  display: flex;
  align-items: center;
  gap: 17px;
  background: #fff;
  border: 1px solid #cbd5e1;
  border-radius: 6px;
  color: #1d4ed8;
  font-size: 16.400px;
  font-weight: 500;
}
.and svg { color: #1d4ed8; }

.expr { position: relative; display: flex; padding: 49px 0 0 50px; }
.link { position: absolute; height: 3px; background: #8a8a88; left: 0; width: 43px; top: 87px; }
.expr-grip { margin-top: 29px; color: #334155; margin-left: -1px; }
.expr-rows { display: flex; flex-direction: column; gap: 12px; margin-left: 11px; }
.expr-line { display: flex; align-items: center; }
.fld {
  height: 32px;
  display: flex;
  align-items: center;
  background: #fff;
  border: 1px solid #cbd5e1;
  border-radius: 6px;
  font-size: 16.300px;
  color: #334155;
  flex: none;
}
.fld-sel { width: 193px; padding-left: 12px; margin-right: 13px; }
.fld-chev { margin-left: auto; margin-right: 14px; color: #475569; }
.fld-op { width: 164px; padding-left: 12px; }
.expr-trash { color: #f87171; margin-left: 13px; }
.fld-type { width: 108px; padding-left: 15px; gap: 12px; background: #f1f5f9; margin-right: 12px; white-space: nowrap; }
.fld-type svg { color: #1e293b; }
.fld-val { width: 229px; padding-left: 12px; margin-right: 12px; white-space: nowrap; }
.fld-exp { margin-left: auto; margin-right: 8px; color: #475569; }
.fld-add { width: 33px; justify-content: center; background: #dbe6f5; border-color: #bfd3ee; color: #5b9bef; }

.group-actions { position: relative; display: flex; gap: 12px; margin-top: 33px; padding-left: 46px; }
.link2 { top: 5px; width: 45px; }
.ghost {
  height: 38px;
  padding: 0 12px 0 14px;
  display: flex;
  align-items: center;
  gap: 6px;
  background: #fff;
  border: 1px solid #cbd5e1;
  border-radius: 5px;
  font-size: 16.400px;
  color: #334155;
}
.ghost svg { color: #1e293b; }
.tree-btn { position: relative; margin: 26px 0 0 23px; display: flex; }
.link3 { left: -47px; top: 6px; width: 48px; }
.drop { margin: 0; text-align: center; font-size: 16.400px; color: #334155; line-height: 20px; }
.sec-proj .drop, .sec-sort .drop { margin-top: 60px; margin-left: -22px; }

.panel-v {
  position: absolute;
  left: 536px;
  top: 0;
  width: 11px;
  height: 522px;
  border-radius: 0 0 5px 5px;
  background: #c1c1c1;
}
.panel-h {
  position: absolute;
  left: 2px;
  top: 874px;
  width: 492px;
  height: 12px;
  border-radius: 6px;
  background: #c1c1c1;
}
.panel-foot {
  height: 81px;
  flex: none;
  display: flex;
  align-items: center;
  padding: 0 23px 0 24px;
  gap: 11px;
  border-top: 1px solid #e2e8f0;
}
.foot-run {
  width: 345px;
  justify-content: center;
  gap: 14px;
  background: #2563eb;
  color: #fff;
}
.foot-reset {
  width: 145px;
  height: 33px;
  justify-content: center;
  background: #e2e8f0;
  color: #334155;
}

/* right rail */
.rail {
  width: 58px;
  margin-left: 2px;
  flex: none;
  display: flex;
  flex-direction: column;
  justify-content: space-between;
  align-items: center;
  background: #d9dbdf;
  color: #64748b;
  padding: 19px 0 17px;
  border-left: 1px solid #ccd6e4;
}
.rail-top { display: flex; flex-direction: column; align-items: center; gap: 27px; }
.rail-bottom { display: flex; flex-direction: column; align-items: center; gap: 25px; }

/* status */
.status {
  height: 36px;
  flex: none;
  display: flex;
  align-items: center;
  padding: 1px 57px 0 10px;
  background: #0078d0;
  color: #e7f2fb;
  font-size: 14.500px;
}
.version { font-family: "DejaVu Sans Mono", monospace; font-size: 14.400px; margin-right: auto; }
.st-item { display: flex; align-items: center; gap: 10px; }
.st-short { margin-right: 36px; }
</style>
